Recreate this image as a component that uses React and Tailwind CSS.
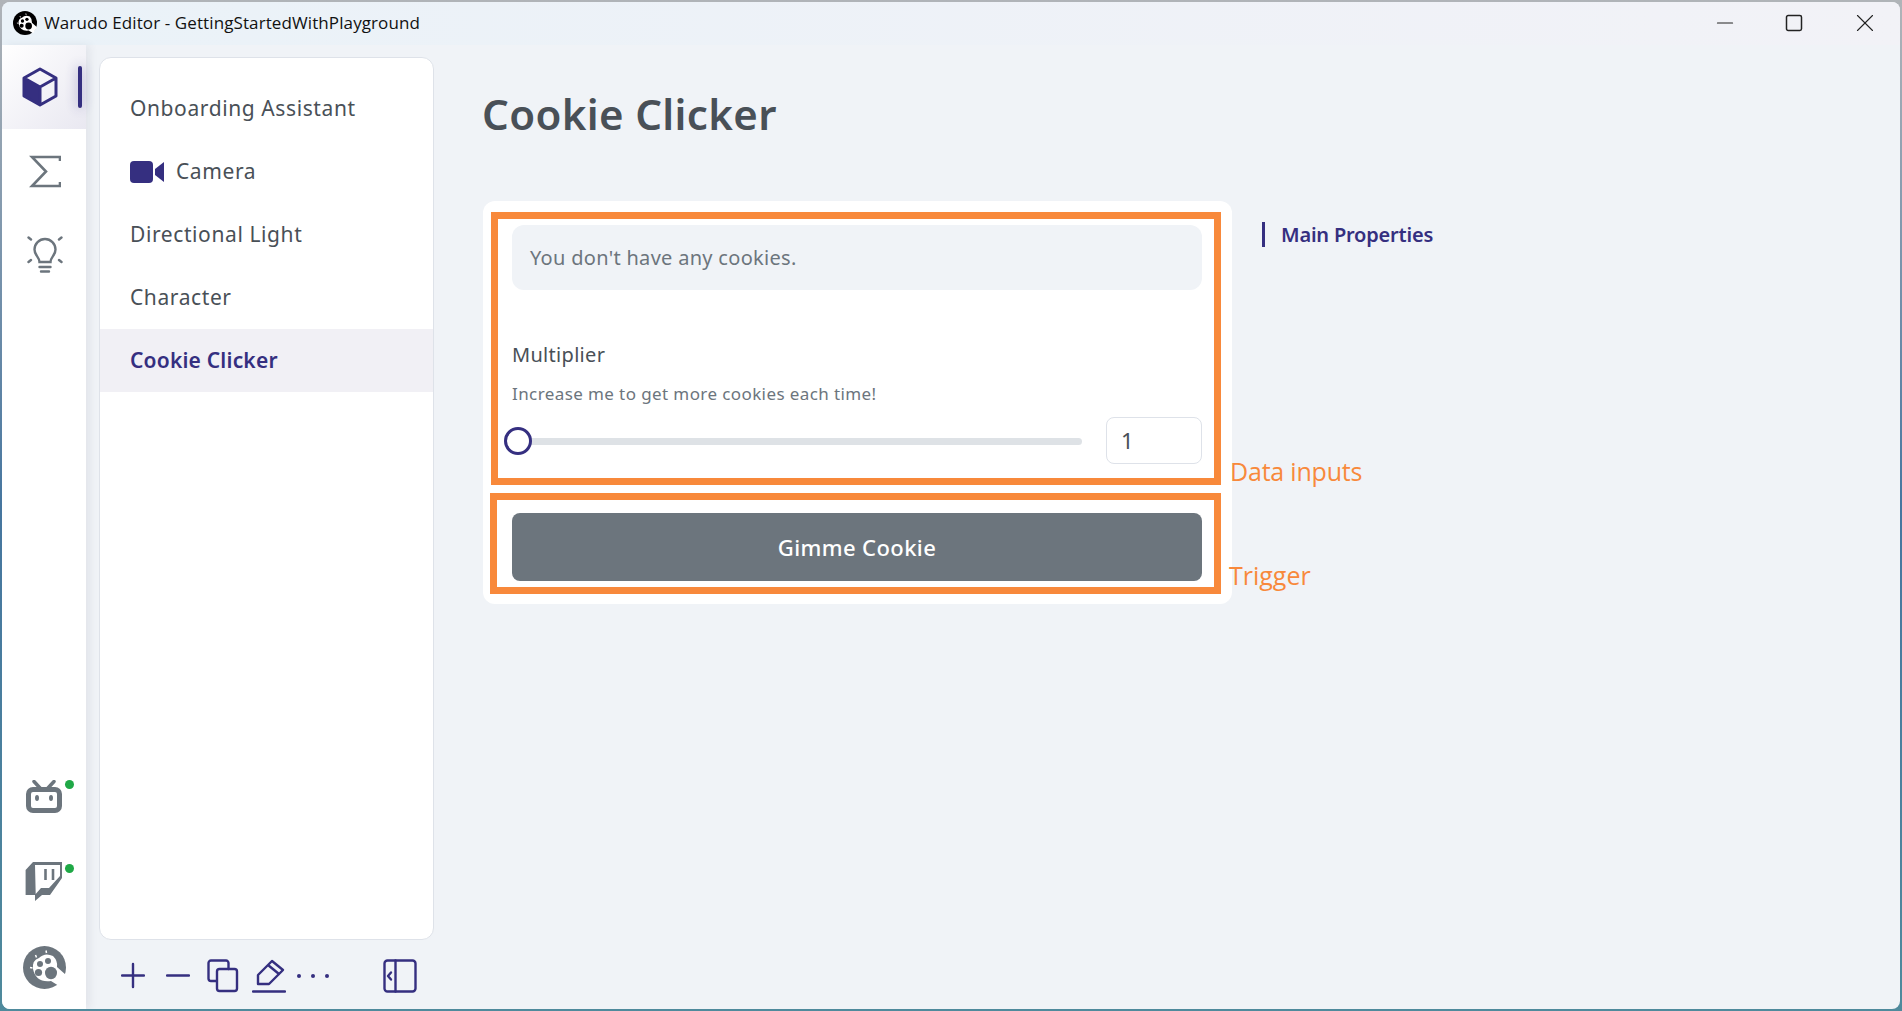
import { Minus, Square, X } from 'lucide-react';

const font = { fontFamily: '"Noto Sans", sans-serif' };
const openSans = { fontFamily: '"Open Sans", sans-serif' };

const PawLogo = ({ size = 43, bg = '#6c757d', fg = '#fff' }) => (
    <svg width={size} height={size} viewBox="0 0 43 43">
        <circle cx="21.5" cy="21.5" r="21.5" fill={bg} />
        <path d="M10 23 Q9 14 16 12 Q22 6 30 10 Q35 15 34 21 L43 29 L36 40 L28 35 Q13 37 10 23 Z" fill={fg} />
        <circle cx="17" cy="18" r="3" fill={bg} />
        <circle cx="25" cy="15" r="3" fill={bg} />
        <circle cx="15.5" cy="26.5" r="3.6" fill={bg} />
        <ellipse cx="28" cy="27" rx="6" ry="6.2" fill={bg} />
        <path d="M12.5 9 l1 2.5 M23 4.5 l0.5 2.5 M7 21.5 l2.5 0.5" stroke={fg} strokeWidth="1.5" />
    </svg>
);

const Cube = () => (
    <svg width="36" height="40" viewBox="0 0 36 40">
        <path d="M18 20 L2 11 L2 29 L18 38 Z" fill="#352f80" />
        <path d="M18 2 L34 11 L34 29 L18 38 L2 29 L2 11 Z M2 11 L18 20 L34 11 M18 20 L18 38" fill="none" stroke="#352f80" strokeWidth="3" strokeLinejoin="round" />
    </svg>
);

const SigmaIcon = () => (
    <svg width="32" height="33" viewBox="0 0 32 33" fill="none" stroke="#6c757d" strokeWidth="2.6">
        <path d="M31 6 V2 H3 L17 16.5 L3 31 H31 V27" />
    </svg>
);

const Bulb = () => (
    <svg width="36" height="37" viewBox="0 0 36 37" fill="none" stroke="#6c757d" strokeWidth="2.4" strokeLinecap="round">
        <path d="M12.5 26 C12.5 21 7.5 19.5 7.5 13.5 A10.5 10.5 0 0 1 28.5 13.5 C28.5 19.5 23.5 21 23.5 26 Z" />
        <path d="M12.5 31 H23.5 M14 35.5 H22" />
        <path d="M1.5 1.5 L4 3.5 M34.5 1.5 L32 3.5 M1.5 26 L4 24 M34.5 26 L32 24" />
    </svg>
);

const Bilibili = () => (
    <svg width="36" height="33" viewBox="0 0 36 33" fill="none" stroke="#6c757d">
        <rect x="2.5" y="9.5" width="31" height="21" rx="4.5" strokeWidth="5" />
        <path d="M8 1.5 L14 8 M28 1.5 L22 8" strokeWidth="3.5" strokeLinecap="round" />
        <ellipse cx="11" cy="18" rx="2" ry="3" fill="#6c757d" stroke="none" />
        <ellipse cx="25" cy="18" rx="2" ry="3" fill="#6c757d" stroke="none" />
    </svg>
);

const Twitch = () => (
    <svg width="38" height="40" viewBox="0 0 38 40">
        <path d="M8 0 H37 V16 L25 33 H17 L10 39 V33 H0.6 V8 Z" fill="#6c757d" />
        <path d="M10 3 H35 V14 L24 26 H16 L10.7 32 Z" fill="#fff" />
        <path d="M20.5 7 V18 M28 7 V18" stroke="#6c757d" strokeWidth="2.6" />
    </svg>
);

const ToolIcon = ({ w, children }) => (
    <svg width={w} height="34" viewBox={`0 0 ${w} 34`} fill="none" stroke="#352f80" strokeWidth="2.4" strokeLinecap="round" strokeLinejoin="round">
        {children}
    </svg>
);

const items = ['Onboarding Assistant', 'Camera', 'Directional Light', 'Character', 'Cookie Clicker'];

const App = () => {
    return (
        <div className="w-full h-[1011px] overflow-hidden p-[2px] bg-gradient-to-b from-[#b0b4b8] via-[#46769f] to-[#4f8a9c]" style={font}>
            <div className="w-full h-full rounded-lg overflow-hidden bg-[#f0f3f7] flex flex-col">
                {/* title bar */}
                <div className="h-[43px] shrink-0 flex items-center pb-[2px] bg-gradient-to-r from-[#eaf2f8] to-[#f2f2f7]">
                    <div className="ml-[11px] flex"><PawLogo size={24} bg="#000" /></div>
                    <span className="ml-[7px] text-[17px] tracking-[0.1px] text-[#111]" style={openSans}>Warudo Editor - GettingStartedWithPlayground</span>
                    <div className="ml-auto flex items-center gap-[46px] mr-[20px] text-[#222]">
                        <Minus size={26} strokeWidth={1} />
                        <Square size={20} strokeWidth={1.8} />
                        <X size={30} strokeWidth={0.9} />
                    </div>
                </div>

                <div className="flex-1 flex min-h-0">
                    {/* icon rail */}
                    <div className="w-[84px] shrink-0 bg-white flex flex-col shadow-[4px_0_8px_rgba(60,70,90,0.08)]">
                        <div className="relative h-[84px] flex items-center pl-[20px] bg-gradient-to-br from-white to-[#e9e8f1]">
                            <Cube />
                            <div className="absolute left-[76px] top-[21px] w-[4px] h-[42px] rounded bg-[#352f80] shadow-[0_0_12px_rgba(53,47,128,0.45)]"></div>
                        </div>
                        <div className="h-[84px] flex items-center pl-[27px]"><SigmaIcon /></div>
                        <div className="h-[84px] flex items-center pl-[25px] pb-[2px]"><Bulb /></div>
                        <div className="mt-auto relative h-[86px] flex items-center pl-[24px]">
                            <Bilibili />
                            <div className="absolute left-[63px] top-[27px] w-[9px] h-[9px] rounded-full bg-[#1fa846]"></div>
                        </div>
                        <div className="relative h-[86px] flex items-center pl-[23px]">
                            <Twitch />
                            <div className="absolute left-[63px] top-[25px] w-[9px] h-[9px] rounded-full bg-[#1fa846]"></div>
                        </div>
                        <div className="h-[84px] flex items-start pl-[21px] pt-[21px]"><PawLogo /></div>
                    </div>

                    {/* entity list */}
                    <div className="w-[335px] ml-[13px] shrink-0 flex flex-col">
                        <div className="mt-[12px] h-[883px] bg-white border border-[#dee2e9] rounded-xl pt-[19px]">
                            {items.map((item) => (
                                <div
                                    key={item}
                                    className={`h-[63px] pl-[30px] flex items-center text-[21px] ${item === 'Cookie Clicker' ? 'tracking-[0.2px] bg-[#f1f0f5] text-[#352f80] font-semibold' : 'tracking-[0.6px] text-[#495057]'}`}
                                >
                                    {item === 'Camera' && (
                                        <svg width="35" height="24" viewBox="0 0 35 24" className="mr-[11px]">
                                            <rect x="0" y="1" width="23" height="22" rx="4" fill="#352f80" />
                                            <path d="M25 9 L34 2 V22 L25 15 Z" fill="#352f80" />
                                        </svg>
                                    )}
                                    {item}
                                </div>
                            ))}
                        </div>
                        <div className="flex-1 flex items-center pl-[22px] pt-[2px]">
                            <ToolIcon w={24}><path d="M12 5 V28 M1 16.5 H23" /></ToolIcon>
                            <div className="ml-[21px]"><ToolIcon w={24}><path d="M1 16.5 H23" /></ToolIcon></div>
                            <div className="ml-[17px]">
                                <ToolIcon w={32}>
                                    <path d="M9 22 H4 A2.5 2.5 0 0 1 1.5 19.5 V4 A2.5 2.5 0 0 1 4 1.5 H19 A2.5 2.5 0 0 1 21.5 4 V10" />
                                    <rect x="10" y="10" width="20" height="22" rx="2.5" />
                                </ToolIcon>
                            </div>
                            <div className="ml-[13px]">
                                <ToolIcon w={34}>
                                    <path d="M6 16 L20 2 L31 11 L17 25 H6 Z M16 6 L27 15" />
                                    <path d="M1 32.5 H33" />
                                </ToolIcon>
                            </div>
                            <div className="ml-[11px] flex gap-[10px]">
                                <div className="w-[4px] h-[4px] rounded-full bg-[#352f80]"></div>
                                <div className="w-[4px] h-[4px] rounded-full bg-[#352f80]"></div>
                                <div className="w-[4px] h-[4px] rounded-full bg-[#352f80]"></div>
                            </div>
                            <div className="ml-[54px]">
                                <ToolIcon w={34}>
                                    <rect x="1.5" y="1.5" width="31" height="31" rx="3" />
                                    <path d="M12.5 1.5 V32.5 M8 13.5 L5 17 L8 20.5" />
                                </ToolIcon>
                            </div>
                        </div>
                    </div>

                    {/* main */}
                    <div className="ml-[49px] flex-1 min-w-0">
                        <h1 className="h-[156px] pt-[40px] -ml-[1px] text-[42px] leading-[58px] tracking-[0.35px] font-semibold text-[#495057]">Cookie Clicker</h1>
                        <div className="flex items-start">
                            <div className="relative w-[749px] h-[403px] bg-white rounded-xl pt-[11px] pl-[8px]">
                                <div className="w-[730px] h-[273px] border-[7px] border-[#f8893b] pt-[6px] pl-[14px] pr-[12px]">
                                    <div className="h-[65px] rounded-xl bg-[#f0f3f7] flex items-center pl-[18px] text-[20px] text-[#6c757d] tracking-[0.3px]">You don't have any cookies.</div>
                                    <div className="mt-[52px] text-[20px] leading-[26px] tracking-[0.3px] text-[#495057]">Multiplier</div>
                                    <div className="mt-[16px] text-[17px] leading-[20px] text-[#6c757d] tracking-[0.4px]">Increase me to get more cookies each time!</div>
                                    <div className="mt-[13px] flex items-center">
                                        <div className="relative w-[570px] h-[7px] mt-[2px] rounded bg-[#dee2e6]">
                                            <div className="absolute left-[-8px] top-[-11px] w-[28px] h-[28px] rounded-full bg-white border-[3px] border-[#352f80]"></div>
                                        </div>
                                        <div className="ml-[24px] w-[96px] h-[47px] rounded-lg border border-[#dee2e9] flex items-center pl-[14px] text-[22px] text-[#495057]">1</div>
                                    </div>
                                </div>
                                <div className="mt-[8px] w-[731px] h-[101px] border-[7px] border-[#f8893b] pl-[15px] pt-[13px] -ml-[1px]">
                                    <div className="w-[690px] h-[68px] rounded-lg bg-[#6c757d] flex items-center justify-center text-white text-[22px] tracking-[0.4px] font-medium">Gimme Cookie</div>
                                </div>
                                {/* annotations */}
                                <span className="absolute left-[747px] top-[253px] whitespace-nowrap text-[25px] leading-[34px] tracking-[-0.2px] text-[#f8893b]" style={openSans}>Data inputs</span>
                                <span className="absolute left-[746px] top-[357px] whitespace-nowrap text-[25px] leading-[34px] text-[#f8893b]" style={openSans}>Trigger</span>
                            </div>
                            <div className="ml-[30px] mt-[21px] h-[25px] border-l-[3px] border-[#352f80] pl-[16px] flex items-center pt-[1px] text-[20px] tracking-[-0.2px] font-semibold text-[#352f80]">Main Properties</div>
                        </div>
                    </div>
                </div>
            </div>
        </div>
    );
};

export default App;
